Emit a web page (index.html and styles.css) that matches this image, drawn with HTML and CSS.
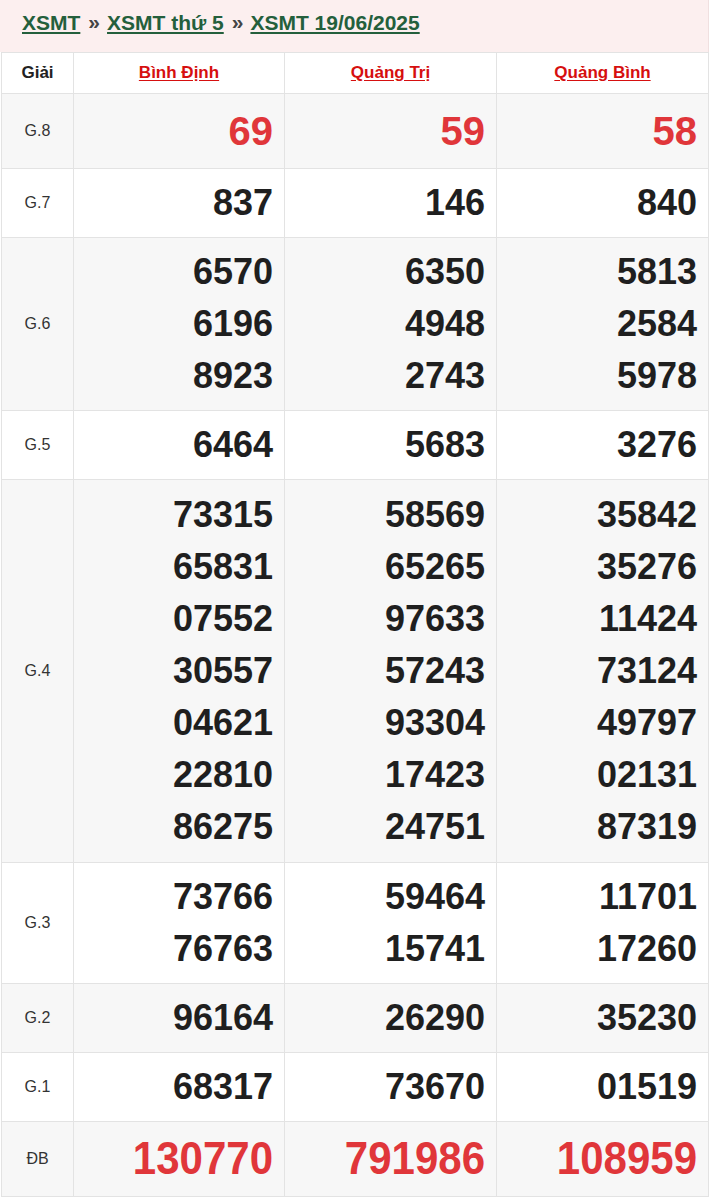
FILE: index.html
```html
<!DOCTYPE html>
<html lang="vi">
<head>
<meta charset="utf-8">
<title>XSMT 19/06/2025</title>
<link rel="stylesheet" href="styles.css">
</head>
<body>
<div class="page">
  <div class="crumbs">
    <a href="#">XSMT</a><span class="sep">»</span><a href="#">XSMT thứ 5</a><span class="sep">»</span><a href="#">XSMT 19/06/2025</a>
  </div>
  <table class="kq">
    <colgroup><col class="c0"><col class="c1"><col class="c2"><col class="c3"></colgroup>
    <thead>
      <tr><th class="lbl-h">Giải</th><th><a href="#">Bình Định</a></th><th><a href="#">Quảng Trị</a></th><th><a href="#">Quảng Bình</a></th></tr>
    </thead>
    <tbody>
      <tr class="g8 alt"><td class="lbl">G.8</td><td class="num">69</td><td class="num">59</td><td class="num">58</td></tr>
      <tr><td class="lbl">G.7</td><td class="num">837</td><td class="num">146</td><td class="num">840</td></tr>
      <tr class="alt"><td class="lbl">G.6</td><td class="num">6570<br>6196<br>8923</td><td class="num">6350<br>4948<br>2743</td><td class="num">5813<br>2584<br>5978</td></tr>
      <tr><td class="lbl">G.5</td><td class="num">6464</td><td class="num">5683</td><td class="num">3276</td></tr>
      <tr class="alt g4"><td class="lbl">G.4</td><td class="num">73315<br>65831<br>07552<br>30557<br>04621<br>22810<br>86275</td><td class="num">58569<br>65265<br>97633<br>57243<br>93304<br>17423<br>24751</td><td class="num">35842<br>35276<br>11424<br>73124<br>49797<br>02131<br>87319</td></tr>
      <tr><td class="lbl">G.3</td><td class="num">73766<br>76763</td><td class="num">59464<br>15741</td><td class="num">11701<br>17260</td></tr>
      <tr class="alt"><td class="lbl">G.2</td><td class="num">96164</td><td class="num">26290</td><td class="num">35230</td></tr>
      <tr><td class="lbl">G.1</td><td class="num">68317</td><td class="num">73670</td><td class="num">01519</td></tr>
      <tr class="db alt"><td class="lbl">ĐB</td><td class="num"><span>130770</span></td><td class="num"><span>791986</span></td><td class="num"><span>108959</span></td></tr>
    </tbody>
  </table>
</div>
</body>
</html>
```

FILE: styles.css
```css
html, body {
  margin: 0;
  padding: 0;
  background: #ffffff;
  font-family: "Liberation Sans", Arial, sans-serif;
  color: #222;
}

.page {
  width: 709px;
}

.crumbs {
  background: #fcefef;
  height: 52px;
  box-sizing: border-box;
  padding: 9px 0 0 22px;
  font-size: 21px;
  font-weight: bold;
  line-height: 28px;
  color: #3a3a3a;
  border-right: 1px solid #f0e0e0;
}

.crumbs a {
  color: #245f3c;
  text-decoration: underline;
  text-underline-offset: 2px;
}

.crumbs .sep {
  display: inline-block;
  margin: 0 7px 0 8px;
  color: #444;
  font-weight: bold;
  position: relative;
  top: -1px;
}

.kq {
  border-collapse: collapse;
  width: 707px;
  margin-left: 1px;
  table-layout: fixed;
}

.c0 { width: 72px; }
.c1 { width: 211px; }
.c2 { width: 212px; }
.c3 { width: 212px; }

.kq th, .kq td {
  border: 1px solid #e3e3e3;
}

.kq th {
  height: 40px;
  padding: 0;
  font-size: 17px;
  font-weight: bold;
  text-align: center;
  vertical-align: middle;
  background: #fff;
}

.kq th.lbl-h {
  color: #222;
  font-size: 17px;
}

.kq th a {
  color: #d60f0f;
  text-decoration: underline;
  text-underline-offset: 2px;
}

.kq tr.alt td {
  background: #f7f7f7;
}

.kq td.lbl {
  text-align: center;
  font-size: 16px;
  color: #333;
  padding: 0;
}

.kq td.num {
  text-align: right;
  padding: 8px 11px 8px 8px;
  font-size: 36px;
  font-weight: bold;
  line-height: 52px;
  color: #1f1f1f;
}

.kq tr.g4 td.num {
  padding-top: 9px;
  padding-bottom: 9px;
}

.kq tr.g8 td.num {
  font-size: 40px;
  line-height: 58px;
  color: #e0363a;
}

.kq tr.db td.num {
  font-size: 42px;
  line-height: 58px;
  color: #e0363a;
  padding-top: 8px;
  padding-bottom: 8px;
}

.kq tr.db td.num span {
  display: inline-block;
  transform: scaleY(1.1);
}
```
